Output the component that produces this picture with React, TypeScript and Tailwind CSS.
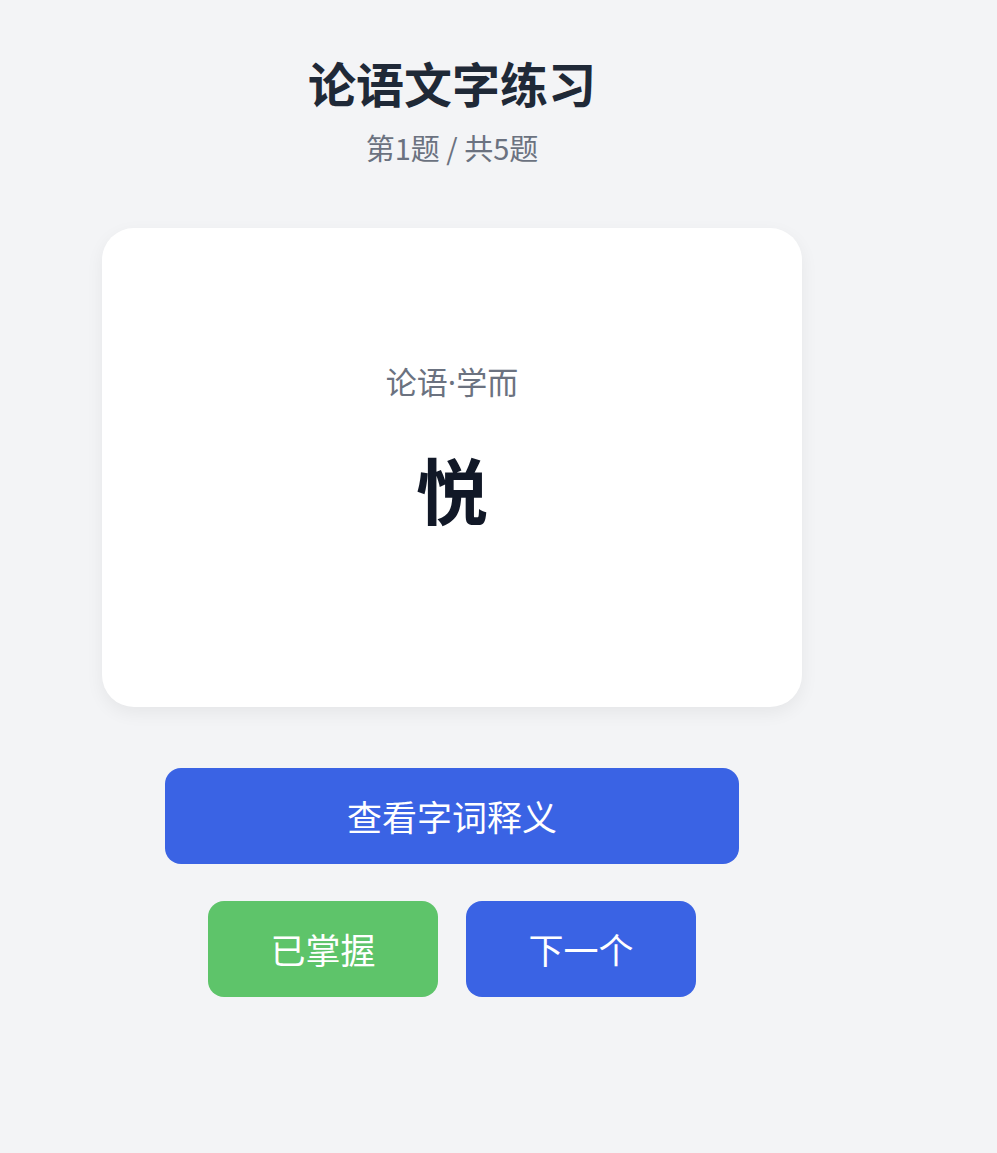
import React from "react";

const font = "font-['Noto_Sans_CJK_SC','Noto_Sans',sans-serif]";

export default function App() {
  return (
    <div className={`min-h-screen bg-[#f3f4f6] ${font}`}>
      <div className="w-[904px] flex flex-col items-center pt-[51px]">
        {/* Header */}
        <h1 className="text-[48px] leading-[62px] font-bold text-[#1f2937]">论语文字练习</h1>
        <p className="mt-[14px] text-[29px] leading-[40px] text-[#6b7280]">第1题 / 共5题</p>

        {/* Card */}
        <div className="mt-[61px] w-[700px] h-[479px] bg-white rounded-[32px] shadow-[0_6px_18px_rgba(0,0,0,0.06)] flex flex-col items-center pt-[133px]">
          <div className="text-[31px] leading-[40px] text-[#6b7280]">
            论语<span className="font-['Noto_Sans',sans-serif]">·</span>学而
          </div>
          <div className="mt-[46px] text-[72px] leading-[80px] font-bold text-[#111827]">悦</div>
        </div>

        {/* Actions */}
        <button className="mt-[61px] w-[574px] h-[96px] rounded-[16px] bg-[#3a63e4] text-white text-[35px]">
          查看字词释义
        </button>
        <div className="mt-[37px] flex gap-[28px]">
          <button className="w-[230px] h-[96px] rounded-[16px] bg-[#5ec46a] text-white text-[35px]">已掌握</button>
          <button className="w-[230px] h-[96px] rounded-[16px] bg-[#3a63e4] text-white text-[35px]">下一个</button>
        </div>
      </div>
    </div>
  );
}
